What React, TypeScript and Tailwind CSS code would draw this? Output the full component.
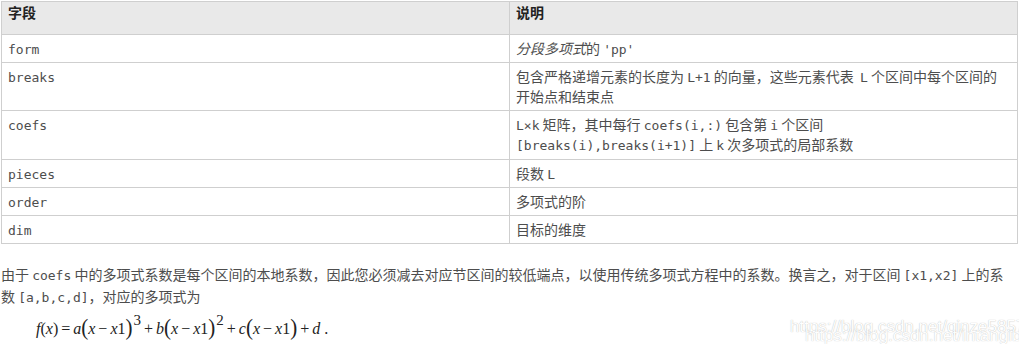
import React from "react";

const cjk = "font-['Microsoft_YaHei','Noto_Sans_CJK_SC',sans-serif]";
const mono = "font-['DejaVu_Sans_Mono','Noto_Sans_CJK_SC',monospace] text-[13px] leading-none";

function C({ children }: { children: React.ReactNode }) {
  return <code className={mono}>{children}</code>;
}

const rows: { f: string; d: React.ReactNode }[] = [
  {
    f: "form",
    d: (
      <>
        <em className="italic">分段多项式</em>的 <C>'pp'</C>
      </>
    ),
  },
  {
    f: "breaks",
    d: (
      <>
        包含严格递增元素的长度为 <C>L+1</C> 的向量，这些元素代表&nbsp; <C>L</C> 个区间中每个区间的
        <br />
        开始点和结束点
      </>
    ),
  },
  {
    f: "coefs",
    d: (
      <>
        <C>L×k</C> 矩阵，其中每行 <C>coefs(i,:)</C> 包含第 <C>i</C> 个区间
        <br />
        <C>[breaks(i),breaks(i+1)]</C> 上 <C>k</C> 次多项式的局部系数
      </>
    ),
  },
  { f: "pieces", d: <>段数 <C>L</C></> },
  { f: "order", d: <>多项式的阶</> },
  { f: "dim", d: <>目标的维度</> },
];

function P({ children }: { children: React.ReactNode }) {
  return (
    <span className="not-italic text-[21px] leading-none inline-block scale-y-[1.1] font-light">{children}</span>
  );
}

function Sup({ children }: { children: React.ReactNode }) {
  return <span className="relative -top-[9px] text-[15px] leading-none ml-[1px]">{children}</span>;
}

function Op({ children }: { children: React.ReactNode }) {
  return <span className="mx-[3px]">{children}</span>;
}

function Formula() {
  const it = "italic";
  return (
    <div className="font-['Liberation_Serif',serif] text-[16px] leading-[24px] text-[#222] flex items-baseline pl-[36px] whitespace-pre">
      <span className={it}>f</span>
      <span>(</span>
      <span className={it}>x</span>
      <span>)</span>
      <Op>=</Op>
      <span className={it}>a</span>
      <P>(</P>
      <span className={it}>x</span>
      <Op>−</Op>
      <span className={it}>x</span>
      <span>1</span>
      <P>)</P>
      <Sup>3</Sup>
      <Op>+</Op>
      <span className={it}>b</span>
      <P>(</P>
      <span className={it}>x</span>
      <Op>−</Op>
      <span className={it}>x</span>
      <span>1</span>
      <P>)</P>
      <Sup>2</Sup>
      <Op>+</Op>
      <span className={it}>c</span>
      <P>(</P>
      <span className={it}>x</span>
      <Op>−</Op>
      <span className={it}>x</span>
      <span>1</span>
      <P>)</P>
      <Op>+</Op>
      <span className={it}>d</span>
      <span className="ml-[4px]">.</span>
    </div>
  );
}

const cell = "border border-[#cfcfcf] align-top px-[6px] leading-[20px]";

export default function App() {
  return (
    <div className={`relative w-[1019px] h-[344px] bg-white overflow-hidden text-[#4d4d4d] ${cjk} text-[14px]`}>
      <div className="pt-[1px] pl-[1px]">
        <table className="w-[1017px] border-collapse table-fixed">
          <colgroup>
            <col className="w-[508px]" />
            <col />
          </colgroup>
          <thead>
            <tr className="bg-[#e9e9e9]">
              <th className={`${cell} h-[33px] text-left font-bold text-[#222] align-middle`}>字段</th>
              <th className={`${cell} h-[33px] text-left font-bold text-[#222] align-middle`}>说明</th>
            </tr>
          </thead>
          <tbody>
            {rows.map((r) => {
              const h = r.f === "breaks" ? "h-[48px]" : r.f === "coefs" ? "h-[49px]" : "h-[28px]";
              return (
                <tr key={r.f}>
                  <td className={`${cell} ${h} pt-[3px] pb-0`}>
                    <C>{r.f}</C>
                  </td>
                  <td className={`${cell} ${h} pt-[3px] pb-0`}>{r.d}</td>
                </tr>
              );
            })}
          </tbody>
        </table>
      </div>
      <div className="mt-[19px] pl-[1px] leading-[22px] whitespace-nowrap">
        <div>
          由于 <C>coefs</C> 中的多项式系数是每个区间的本地系数，因此您必须减去对应节区间的较低端点，以使用传统多项式方程中的系数。换言之，对于区间 <C>[x1,x2]</C> 上的系
        </div>
        <div>
          数 <C>[a,b,c,d]</C>，对应的多项式为
        </div>
      </div>
      <div className="mt-[10px]">
        <Formula />
      </div>
      <div className="absolute left-[790px] top-[314px] font-['Liberation_Sans',sans-serif] text-[17px] text-white [text-shadow:0_0_1px_#9a9a9a] opacity-80 whitespace-nowrap">
        https://blog.csdn.net/qinze5857
      </div>
      <div className="absolute left-[805px] top-[323px] font-['Liberation_Sans',sans-serif] text-[17px] text-white [text-shadow:0_0_1px_#9a9a9a] opacity-70 whitespace-nowrap">
        https://blog.csdn.net/intangible
      </div>
    </div>
  );
}
